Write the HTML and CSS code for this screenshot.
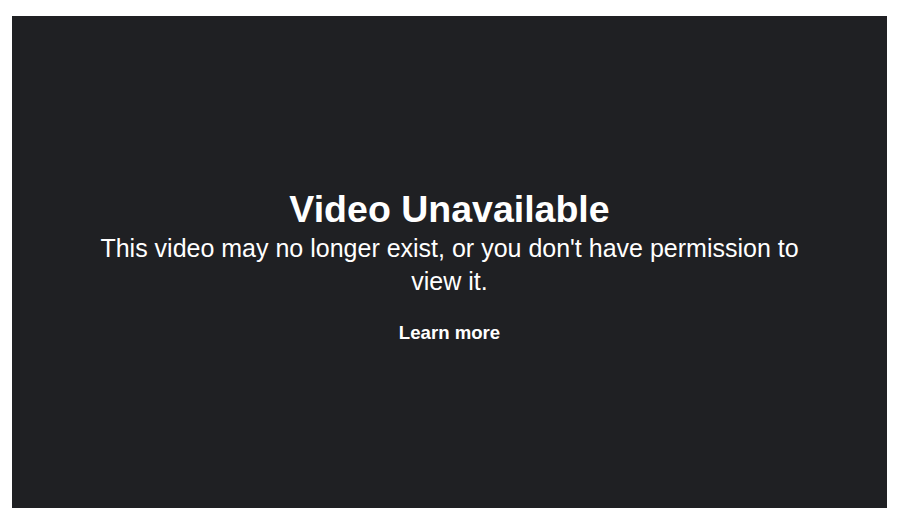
FILE: index.html
```html
<!DOCTYPE html>
<html>
<head>
<meta charset="utf-8">
<link rel="stylesheet" href="styles.css">
</head>
<body>
<div class="player">
  <div class="message">
    <h1 class="title">Video Unavailable</h1>
    <p class="desc">This video may no longer exist, or you don't have permission to view it.</p>
    <a class="learn" href="#">Learn more</a>
  </div>
</div>
</body>
</html>
```
FILE: styles.css
```css
html, body {
  margin: 0;
  padding: 0;
  background: #ffffff;
}
body {
  padding: 16px 13px 11px 12px;
  font-family: "Liberation Sans", Arial, sans-serif;
}
.player {
  height: 492px;
  background: #1f2023;
  display: flex;
  align-items: center;
  justify-content: center;
  color: #ffffff;
}
.message {
  max-width: 720px;
  padding-top: 6px;
  text-align: center;
  display: flex;
  flex-direction: column;
  align-items: center;
}
.title {
  margin: 0;
  font-size: 37.5px;
  line-height: 44px;
  font-weight: bold;
}
.desc {
  margin: 1px 0 0;
  font-size: 25px;
  line-height: 33px;
}
.learn {
  margin-top: 24px;
  color: #ffffff;
  text-decoration: none;
  font-weight: bold;
  font-size: 18.6px;
  line-height: 22px;
}
```
